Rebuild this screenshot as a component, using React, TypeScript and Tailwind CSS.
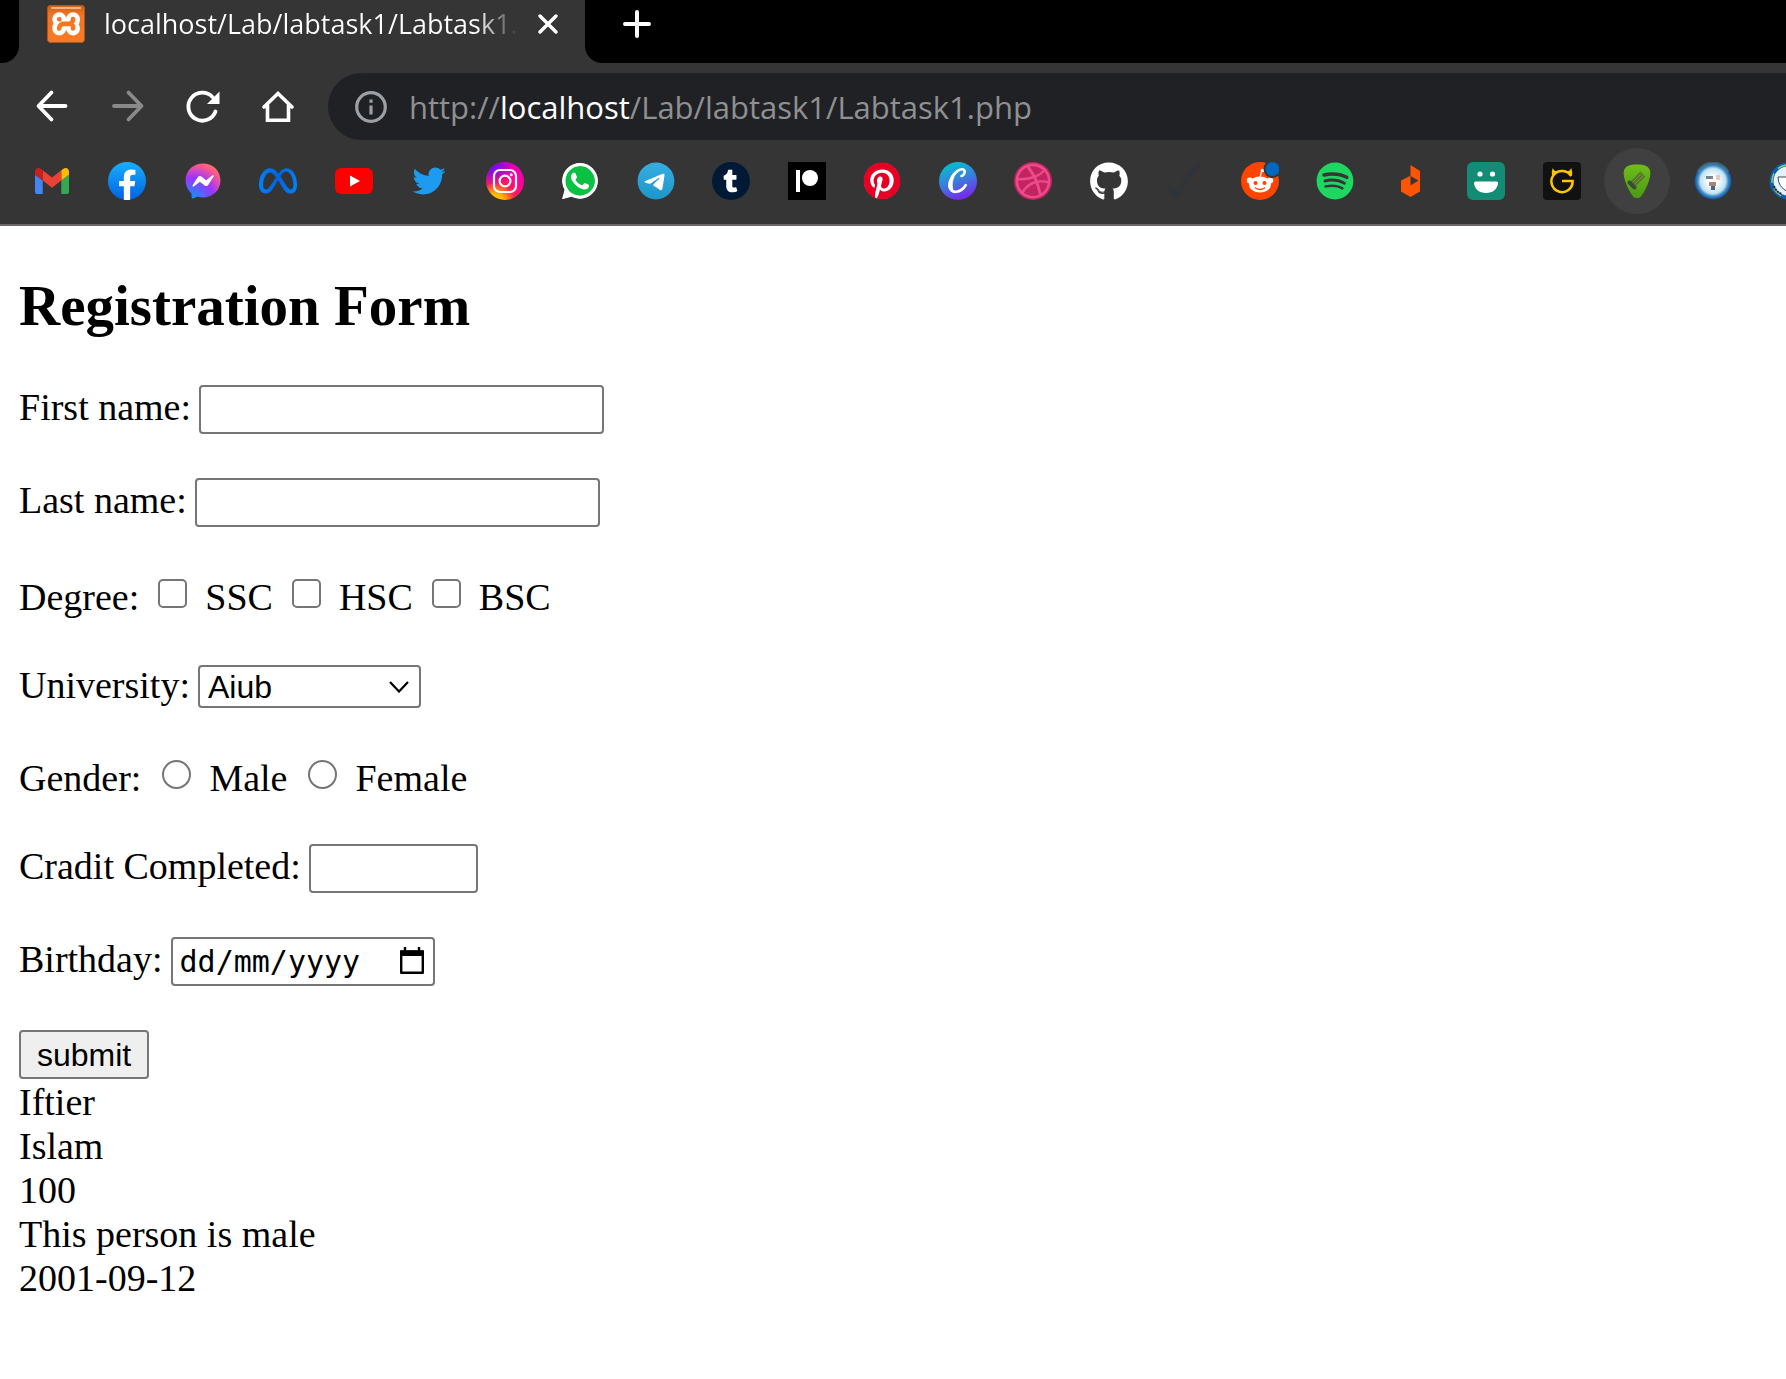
import type { ReactNode } from "react";
import { FaDribbble, FaFacebookMessenger, FaGithub, FaMeta, FaPinterest, FaSpotify, FaTelegram, FaTumblr, FaTwitter, FaWhatsapp } from "react-icons/fa6";
import { SiXampp } from "react-icons/si";

function Icon({ label, children }: { label: string; children: ReactNode }) {
  return (
    <svg viewBox="0 0 38 38" className="size-[38px]" role="img" aria-label={label}>
      {children}
    </svg>
  );
}

const bookmarks: { name: string; active?: boolean; art: ReactNode }[] = [
  {
    name: "Gmail",
    art: (
      <svg x="2" y="6" width="34" height="26" viewBox="52 42 88 66" preserveAspectRatio="none">
        <path fill="#4285f4" d="M58 108h14V74L52 59v43c0 3.32 2.69 6 6 6" />
        <path fill="#34a853" d="M120 108h14c3.32 0 6-2.69 6-6V59l-20 15" />
        <path fill="#fbbc04" d="M120 48v26l20-15v-8c0-7.42-8.47-11.65-14.4-7.2" />
        <path fill="#ea4335" d="M72 74V48l24 18 24-18v26L96 92" />
        <path fill="#c5221f" d="M52 51v8l20 15V48l-5.6-4.2c-5.94-4.45-14.4-.22-14.4 7.2" />
      </svg>
    ),
  },
  {
    name: "Facebook",
    art: (
      <svg viewBox="0 0 36 36" width="38" height="38">
        <defs>
          <linearGradient id="fb" x1="0" y1="0" x2="0" y2="1">
            <stop offset="0" stopColor="#19aeff" />
            <stop offset="1" stopColor="#0062e0" />
          </linearGradient>
        </defs>
        <circle cx="18" cy="18" r="18" fill="url(#fb)" />
        <path fill="#fff" d="M25 23l.8-5H21v-3.5c0-1.4.5-2.5 2.7-2.5H26V7.4c-1.3-.2-2.7-.4-4-.4-4.1 0-7 2.5-7 7v4h-4.5v5H15v12.7c1 .2 2 .3 3 .3s2-.1 3-.3V23h4z" />
      </svg>
    ),
  },
  {
    name: "Messenger",
    art: (
      <>
        <defs>
          <radialGradient id="msg" cx="0.2" cy="1" r="1.1">
            <stop offset="0" stopColor="#0a95ff" />
            <stop offset="0.55" stopColor="#a033ff" />
            <stop offset="0.9" stopColor="#ff5c87" />
            <stop offset="1" stopColor="#ff7061" />
          </radialGradient>
        </defs>
        <rect x="8" y="12" width="22" height="13" fill="#fff" />
        <FaFacebookMessenger x="1" y="1" size={36} fill="url(#msg)" />
      </>
    ),
  },
  {
    name: "Meta",
    art: (
      <>
        <defs>
          <linearGradient id="meta" x1="0" y1="0" x2="1" y2="0">
            <stop offset="0" stopColor="#0082fb" />
            <stop offset="0.5" stopColor="#0064e0" />
            <stop offset="1" stopColor="#0082fb" />
          </linearGradient>
        </defs>
        <FaMeta x="0" y="0" size={38} fill="url(#meta)" />
      </>
    ),
  },
  {
    name: "YouTube",
    art: (
      <>
        <rect x="0" y="6" width="38" height="26" rx="6" fill="#ff0000" />
        <path d="M15 13.500 25 19 15 24.500z" fill="#fff" />
      </>
    ),
  },
  { name: "Twitter", art: <FaTwitter x="2.500" y="2.500" size={33} fill="#1d9bf0" /> },
  {
    name: "Instagram",
    art: (
      <>
        <defs>
          <radialGradient id="ig" cx="0.25" cy="1.05" r="1.15">
            <stop offset="0" stopColor="#ffdd00" />
            <stop offset="0.2" stopColor="#ffb000" />
            <stop offset="0.45" stopColor="#ff1d55" />
            <stop offset="0.7" stopColor="#ff0098" />
            <stop offset="1" stopColor="#e500b8" />
          </radialGradient>
          <radialGradient id="ig2" cx="0.15" cy="0.05" r="0.6">
            <stop offset="0" stopColor="#5a10ff" />
            <stop offset="1" stopColor="#5a10ff" stopOpacity="0" />
          </radialGradient>
        </defs>
        <circle cx="19" cy="19" r="19" fill="url(#ig)" />
        <circle cx="19" cy="19" r="19" fill="url(#ig2)" />
        <rect x="8" y="8" width="22" height="22" rx="6" fill="none" stroke="#fff" strokeWidth="2.200" />
        <circle cx="19" cy="19" r="5.400" fill="none" stroke="#fff" strokeWidth="2.200" />
        <circle cx="25.300" cy="12.700" r="1.500" fill="#fff" />
      </>
    ),
  },
  {
    name: "WhatsApp",
    art: (
      <>
        <path d="M1.500 37 4 28A17.500 17.500 0 1 1 11 34.500z" fill="#fff" />
        <circle cx="19.300" cy="19" r="15" fill="#0ac143" />
        <FaWhatsapp x="-1.500" y="-1.500" size={41} fill="#fff" />
      </>
    ),
  },
  {
    name: "Telegram",
    art: (
      <>
        <defs>
          <linearGradient id="tg" x1="0" y1="0" x2="0" y2="1">
            <stop offset="0" stopColor="#37aee2" />
            <stop offset="1" stopColor="#1e96c8" />
          </linearGradient>
        </defs>
        <circle cx="19" cy="19" r="16" fill="#fff" />
        <FaTelegram x="0" y="0" size={38} fill="url(#tg)" />
      </>
    ),
  },
  {
    name: "Tumblr",
    art: (
      <>
        <circle cx="19" cy="19" r="19" fill="#001935" />
        <FaTumblr x="7" y="7.500" size={23} fill="#fff" />
      </>
    ),
  },
  {
    name: "Patreon",
    art: (
      <>
        <rect width="38" height="38" fill="#000" />
        <rect x="8" y="8" width="4" height="22" fill="#fff" />
        <circle cx="22" cy="16" r="8" fill="#fff" />
      </>
    ),
  },
  {
    name: "Pinterest",
    art: (
      <>
        <circle cx="19" cy="19" r="18" fill="#fff" />
        <FaPinterest x="0" y="0" size={38} fill="#e60023" />
      </>
    ),
  },
  {
    name: "Canva",
    art: (
      <>
        <defs>
          <linearGradient id="cv" x1="0.3" y1="0" x2="0.65" y2="1">
            <stop offset="0" stopColor="#00c4cc" />
            <stop offset="0.5" stopColor="#3b7be0" />
            <stop offset="1" stopColor="#7d20f0" />
          </linearGradient>
        </defs>
        <circle cx="19" cy="19" r="19" fill="url(#cv)" />
        <path d="M22.500 14c1.800-.3 3.600-2.800 3.200-5-.6-2.200-3.700-2.300-6.700-.4C14 11.800 10.300 18.500 10.600 24c.3 4 3 6.200 6.600 5.800 4-.4 7.500-3.300 9.600-6.800" fill="none" stroke="#fff" strokeWidth="2.600" strokeLinecap="round" />
        <path d="M19 8.600C13 11.800 9.300 18.500 9.600 24c.3 3.500 2.500 5.800 5.500 6.200C12 26 12.500 15.500 19 8.600z" fill="#fff" stroke="#fff" strokeWidth="0.800" />
      </>
    ),
  },
  {
    name: "Dribbble",
    art: (
      <>
        <circle cx="19" cy="19" r="19" fill="#c32361" />
        <FaDribbble x="1" y="1" size={36} fill="#ea4c89" />
      </>
    ),
  },
  { name: "GitHub", art: <FaGithub x="-0.500" y="0" size={39} fill="#fff" /> },
  { name: "Tasks", art: <path d="M4 25q4 4 8.500 9Q20 17 34 4" fill="none" stroke="#2f343a" strokeWidth="4.500" strokeLinecap="round" strokeLinejoin="round" /> },
  {
    name: "Reddit",
    art: (
      <>
        <circle cx="19" cy="19" r="19" fill="#ff4500" />
        <path d="M19 16 20.500 9.500" stroke="#fff" strokeWidth="1.200" fill="none" />
        <circle cx="21.500" cy="8.500" r="1.800" fill="#fff" />
        <circle cx="8.800" cy="18.500" r="3" fill="#fff" />
        <circle cx="29.200" cy="18.500" r="3" fill="#fff" />
        <ellipse cx="19" cy="22.500" rx="11" ry="8" fill="#fff" />
        <circle cx="14.500" cy="21" r="2" fill="#ff4500" />
        <circle cx="23.500" cy="21" r="2" fill="#ff4500" />
        <path d="M14.500 26q4.500 3 9 0" fill="none" stroke="#ff4500" strokeWidth="1.400" strokeLinecap="round" />
        <circle cx="31.500" cy="7" r="9" fill="#353535" />
        <circle cx="31.500" cy="7" r="7" fill="#0067c0" />
      </>
    ),
  },
  { name: "Spotify", art: <FaSpotify x="0" y="0" size={38} fill="#1ed760" /> },
  {
    name: "Origami",
    art: <path fillRule="evenodd" fill="#ff5500" d="M18.500 3 28 9v20.500l-9.500 5.500L9 29.500v-11l9.500-4.700zM18.500 14v9.500l8-5z" />,
  },
  {
    name: "Smile",
    art: (
      <>
        <rect width="38" height="38" rx="6" fill="#128c74" />
        <circle cx="13" cy="12" r="2.600" fill="#fff" />
        <circle cx="25.500" cy="12" r="2.600" fill="#fff" />
        <path d="M7 21q0-1.500 1.500-1.500h21q1.500 0 1.500 1.500C30.500 27 26 31 19 31S7.500 27 7 21z" fill="#fff" />
      </>
    ),
  },
  {
    name: "Ultimate Guitar",
    art: (
      <>
        <rect width="38" height="38" rx="4" fill="#111" />
        <path d="M28.200 14.200A10.600 10.600 0 1 0 29.600 19H19" fill="none" stroke="#ffc600" strokeWidth="2.500" />
        <path d="M9 13.500Q8.300 9.500 9.800 6q1.200 3.500 5.500 3.500zM29 13.500Q29.700 9.500 28.200 6q-1.200 3.500-5.500 3.500z" fill="#ffc600" />
      </>
    ),
  },
  {
    name: "Guitar tabs",
    active: true,
    art: (
      <>
        <defs>
          <linearGradient id="pick" x1="0" y1="0" x2="0" y2="1">
            <stop offset="0" stopColor="#70bd1b" />
            <stop offset="1" stopColor="#4a9a10" />
          </linearGradient>
        </defs>
        <path d="M19 2.500c7 0 13 1.500 13.300 8 .3 8-6.800 22-10.300 24.800q-3 2-6 0C12.500 32.500 5.400 18.500 5.700 10.500 6 4 12 2.500 19 2.500z" fill="url(#pick)" />
        <path d="M12.500 19.500 22.500 9.500l5 5-10 10z" fill="#57782b" />
        <path d="M14 21 24 11M16 23l10-10" stroke="#70a83a" strokeWidth="0.700" />
        <path d="m11.500 20.500 5 5" stroke="#3c4a37" strokeWidth="4" strokeLinecap="round" />
      </>
    ),
  },
  {
    name: "University portal",
    art: (
      <>
        <defs>
          <radialGradient id="uni">
            <stop offset="0.25" stopColor="#fff" />
            <stop offset="0.68" stopColor="#bfe3f5" />
            <stop offset="0.84" stopColor="#3f86bf" />
            <stop offset="1" stopColor="#0a4fa0" />
          </radialGradient>
        </defs>
        <circle cx="19" cy="19" r="18.500" fill="url(#uni)" />
        <path d="M4 10A17 17 0 0 1 34 10" fill="none" stroke="#5d8f86" strokeOpacity="0.400" strokeWidth="3" />
        <rect x="12" y="14" width="7" height="3" fill="#78858f" />
        <rect x="22" y="13" width="4" height="5" fill="#e8c9c6" />
        <rect x="15" y="20" width="7" height="4" fill="#a98478" />
        <rect x="17" y="24" width="4" height="4" fill="#55607c" />
      </>
    ),
  },
  {
    name: "University site",
    art: (
      <>
        <circle cx="19" cy="19" r="18.500" fill="#0a5eb0" />
        <circle cx="19" cy="19" r="16" fill="none" stroke="#9cc36b" strokeWidth="1.500" strokeDasharray="10 6" />
        <circle cx="19" cy="19" r="14.500" fill="#e4f3fb" />
        <path d="M5 24q2 6 8 8" fill="none" stroke="#1c2b3a" strokeWidth="2" strokeDasharray="2 1" />
        <path d="M9 15h20q0 10-10 15Q9 25 9 15z" fill="#fff" stroke="#3c4c58" strokeWidth="1" />
      </>
    ),
  },
];

function Browser() {
  return (
    <header className="overflow-hidden border-b-2 border-[#6b6767] bg-[#353535] font-['Open_Sans',sans-serif] text-white">
      <div className="flex h-[63px] bg-[#353535]">
        <div className="w-[19px] rounded-br-[17px] bg-black" />
        <div className="flex w-[566px] items-center pb-4 pl-7">
          <svg viewBox="0 0 38 38" className="size-[38px] shrink-0" role="img" aria-label="XAMPP">
            <defs>
              <linearGradient id="xa" x1="0" y1="0" x2="0" y2="1">
                <stop offset="0" stopColor="#c9601c" />
                <stop offset="0.25" stopColor="#f27420" />
                <stop offset="1" stopColor="#fb7a24" />
              </linearGradient>
            </defs>
            <rect x="4" y="4" width="30" height="30" fill="#fff" />
            <SiXampp x="0" y="0" size={38} fill="url(#xa)" />
            <rect x="0.500" y="0.500" width="37" height="37" rx="3" fill="none" stroke="#a8571f" />
            <path d="M5 3h28" stroke="#f0b48c" strokeWidth="2" strokeLinecap="round" />
          </svg>
          <span className="ml-[19px] w-[414px] overflow-hidden bg-linear-to-r from-white from-90% to-transparent bg-clip-text text-[27px] leading-9 whitespace-nowrap text-transparent">
            localhost/Lab/labtask1/Labtask1.php
          </span>
          <button type="button" aria-label="Close tab" className="ml-5">
            <svg viewBox="0 0 20 20" className="size-5" fill="none" stroke="#fff" strokeWidth="3.400" strokeLinecap="round">
              <path d="m2 2 16 16M18 2 2 18" />
            </svg>
          </button>
        </div>
        <div className="flex flex-1 items-center rounded-bl-[17px] bg-black pb-4 pl-[38px]">
          <button type="button" aria-label="New tab">
            <svg viewBox="0 0 28 28" className="size-7" fill="none" stroke="#fff" strokeWidth="4" strokeLinecap="round">
              <path d="M14 2v24M2 14h24" />
            </svg>
          </button>
        </div>
      </div>

      <div className="flex items-center pt-[10px] pl-[34px]">
        <div className="mr-[33px] flex gap-[39px]">
          <button type="button" aria-label="Back">
            <svg viewBox="0 0 36 36" className="size-9" fill="none" stroke="#fff" strokeWidth="3.800" strokeLinecap="round" strokeLinejoin="round">
              <path d="M31.500 17H5M17.500 3.500 4.500 17l13 13.500" />
            </svg>
          </button>
          <button type="button" aria-label="Forward">
            <svg viewBox="0 0 36 36" className="size-9" fill="none" stroke="#8a8a8a" strokeWidth="3.800" strokeLinecap="round" strokeLinejoin="round">
              <path d="M5 17h27M19.500 3.500 32.500 17l-13 13.500" />
            </svg>
          </button>
          <button type="button" aria-label="Reload">
            <svg viewBox="0 0 36 36" className="size-9" fill="none" stroke="#fff" strokeWidth="3.800" strokeLinecap="round">
              <path d="M31.500 22.500A14 14 0 1 1 28.500 8" />
              <path d="M35.500 2.500v12.500H23z" fill="#fff" stroke="none" />
            </svg>
          </button>
          <button type="button" aria-label="Home">
            <svg viewBox="0 0 36 36" className="size-9" fill="none" stroke="#fff" strokeWidth="3.600" strokeLinecap="round" strokeLinejoin="miter">
              <path d="M5 18 19 4.500 33 18M8.500 16v15.200h21V16" />
            </svg>
          </button>
        </div>
        <div className="flex h-[67px] flex-1 items-center rounded-l-full bg-[#202124] pl-[27px]">
          <svg viewBox="0 0 32 32" className="size-8" fill="none" stroke="#9aa0a6" strokeWidth="3.200" role="img" aria-label="Site information">
            <circle cx="16" cy="16" r="14.300" />
            <path d="M16 14.500v9M16 8.500v3.200" />
          </svg>
          <div role="textbox" aria-label="Address" tabIndex={0} className="ml-[22px] text-[31px] leading-10 whitespace-nowrap text-[#8f9091]">
            http://<span className="text-white">localhost</span>/Lab/labtask1/Labtask1.php
          </div>
        </div>
      </div>

      <nav aria-label="Bookmarks" className="-mr-10 flex pt-2 pb-[10px] pl-[14px]">
        {bookmarks.map((b) => (
          <a key={b.name} href="#" aria-label={b.name} className="flex flex-1 justify-center">
            <span className={b.active ? "flex size-[66px] items-center justify-center rounded-full bg-[#404040]" : "flex size-[66px] items-center justify-center"}>
              <Icon label={b.name}>{b.art}</Icon>
            </span>
          </a>
        ))}
      </nav>
    </header>
  );
}

const box = "h-[49px] rounded-[4px] border-2 border-[#767676] bg-white px-2 text-[32px] font-['Liberation_Sans',sans-serif]";
const choice = "mt-1 mr-[9px] size-[29px] shrink-0 appearance-none border-2 border-[#767676] bg-white";

function Field({ id, label, children }: { id: string; label: string; children: ReactNode }) {
  return (
    <div className="flex items-start gap-2">
      <label htmlFor={id}>{label}</label>
      {children}
    </div>
  );
}

function Choices({ legend, name, type, options }: { legend: string; name: string; type: "checkbox" | "radio"; options: string[] }) {
  return (
    <div role="group" aria-label={legend} className="flex items-start gap-[9px] pt-1">
      <span>{legend}:</span>
      {options.map((o) => (
        <label key={o} className="flex gap-[9px]">
          <input type={type} name={name} value={o} className={`${choice} ${type === "radio" ? "ml-3 rounded-full" : "ml-[10px] rounded-[5px]"}`} />
          {o}
        </label>
      ))}
    </div>
  );
}

export default function App() {
  return (
    <div className="min-h-screen bg-white">
      <Browser />
      <main className="px-[19px] pt-[47px] font-['Liberation_Serif',serif] text-[38px] leading-[44px] text-black">
        <h1 className="mb-[46px] text-[57px] leading-[66px] font-bold">Registration Form</h1>
        <form className="flex flex-col items-start gap-11" onSubmit={(e) => e.preventDefault()}>
          <Field id="first" label="First name:">
            <input id="first" type="text" className={`${box} w-[405px]`} />
          </Field>
          <Field id="last" label="Last name:">
            <input id="last" type="text" className={`${box} w-[405px]`} />
          </Field>
          <Choices legend="Degree" name="degree" type="checkbox" options={["SSC", "HSC", "BSC"]} />
          <Field id="university" label="University:">
            <div className="relative pt-0.5">
              <select id="university" defaultValue="Aiub" className="block h-[43px] w-[223px] appearance-none rounded-[4px] border-2 border-[#767676] bg-white pl-2 font-['Liberation_Sans',sans-serif] text-[32px] leading-9">
                <option>Aiub</option>
              </select>
              <svg viewBox="0 0 20 12" className="pointer-events-none absolute top-[18px] right-3 h-3 w-5" fill="none" stroke="#000" strokeWidth="2.200">
                <path d="m1 1 9 9.500L19 1" />
              </svg>
            </div>
          </Field>
          <Choices legend="Gender" name="gender" type="radio" options={["Male", "Female"]} />
          <Field id="credit" label="Cradit Completed:">
            <input id="credit" type="text" inputMode="numeric" className={`${box} w-[169px]`} />
          </Field>
          <Field id="birthday" label="Birthday:">
            <div className="relative">
              <input id="birthday" type="text" placeholder="dd/mm/yyyy" className="block h-[49px] w-[264px] rounded-[4px] border-2 border-[#767676] bg-white px-[7px] font-['DejaVu_Sans_Mono',monospace] text-[30px] placeholder:text-black" />
              <svg viewBox="0 0 26 28" className="pointer-events-none absolute top-[10px] right-[10px] h-7 w-[26px]" fill="none" stroke="#000">
                <path d="M2.200 4.500h21.600v21.300H2.200z" strokeWidth="2.400" strokeLinejoin="round" />
                <path d="M1 3.500h24V9H1z" fill="#000" stroke="none" />
                <path d="M6 0v5M20 0v5" strokeWidth="2.400" />
              </svg>
            </div>
          </Field>
          <button type="submit" className="h-[49px] rounded-[4px] border-2 border-[#767676] bg-[#efefef] px-4 font-['Liberation_Sans',sans-serif] text-[32px] leading-9">
            submit
          </button>
        </form>
        <div className="pt-px">
          <p>Iftier</p>
          <p>Islam</p>
          <p>100</p>
          <p>This person is male</p>
          <p>2001-09-12</p>
        </div>
      </main>
    </div>
  );
}
